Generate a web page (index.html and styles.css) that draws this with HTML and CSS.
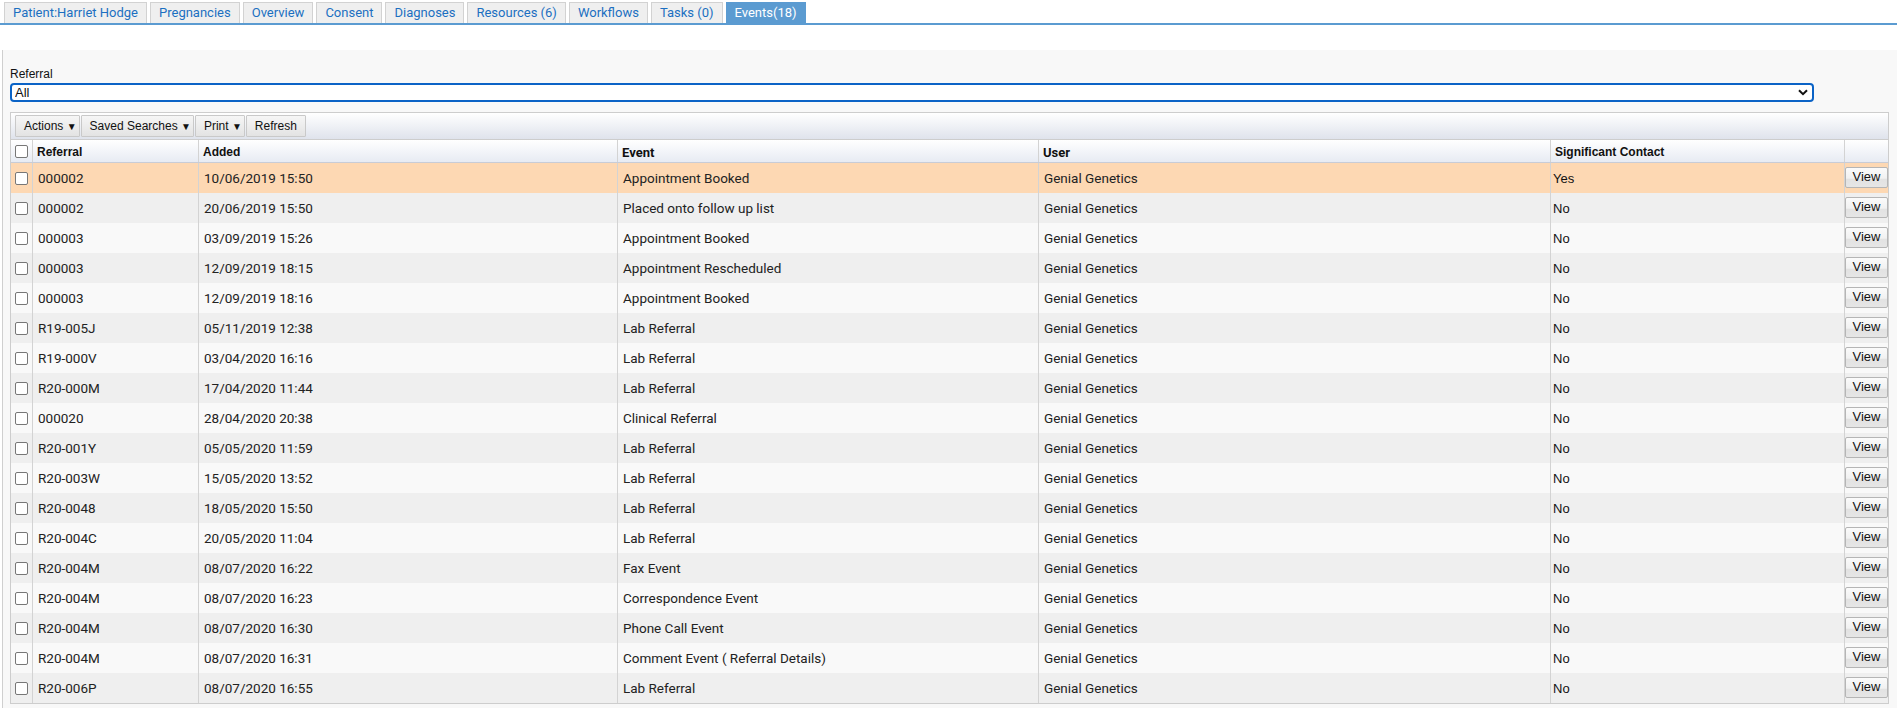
FILE: index.html
```html
<!DOCTYPE html>
<html lang="en">
<head>
<meta charset="utf-8">
<title>Events</title>
<link rel="stylesheet" href="styles.css">
</head>
<body>
<nav class="tabs">
  <a class="tab">Patient:Harriet Hodge</a>
  <a class="tab">Pregnancies</a>
  <a class="tab">Overview</a>
  <a class="tab">Consent</a>
  <a class="tab">Diagnoses</a>
  <a class="tab">Resources (6)</a>
  <a class="tab">Workflows</a>
  <a class="tab">Tasks (0)</a>
  <a class="tab active">Events(18)</a>
</nav>
<div class="gap"></div>
<section class="panel">
  <label class="field-label">Referral</label>
  <div class="select-wrap">
    <select class="select"><option>All</option></select>
    <svg class="chev" width="10" height="7" viewBox="0 0 10 7"><path d="M1 1.2 L5 5.2 L9 1.2" fill="none" stroke="#111" stroke-width="2"/></svg>
  </div>
  <div class="grid-box">
    <div class="toolbar">
      <button class="tbtn dd">Actions <span class="arr">▼</span></button>
      <button class="tbtn dd">Saved Searches <span class="arr">▼</span></button>
      <button class="tbtn dd">Print <span class="arr">▼</span></button>
      <button class="tbtn">Refresh</button>
    </div>
    <div class="row head">
      <div class="c cb"><span class="box"></span></div>
      <div class="c h1">Referral</div>
      <div class="c h1">Added</div>
      <div class="c h2">Event</div>
      <div class="c h2">User</div>
      <div class="c h1 sig">Significant Contact</div>
      <div class="c"></div>
    </div>
    <div id="rows"></div>
  </div>
</section>
<script src="app.js"></script>
</body>
</html>
```

FILE: app.js
```js
const data = [
  ["000002","10/06/2019 15:50","Appointment Booked","Yes"],
  ["000002","20/06/2019 15:50","Placed onto follow up list","No"],
  ["000003","03/09/2019 15:26","Appointment Booked","No"],
  ["000003","12/09/2019 18:15","Appointment Rescheduled","No"],
  ["000003","12/09/2019 18:16","Appointment Booked","No"],
  ["R19-005J","05/11/2019 12:38","Lab Referral","No"],
  ["R19-000V","03/04/2020 16:16","Lab Referral","No"],
  ["R20-000M","17/04/2020 11:44","Lab Referral","No"],
  ["000020","28/04/2020 20:38","Clinical Referral","No"],
  ["R20-001Y","05/05/2020 11:59","Lab Referral","No"],
  ["R20-003W","15/05/2020 13:52","Lab Referral","No"],
  ["R20-0048","18/05/2020 15:50","Lab Referral","No"],
  ["R20-004C","20/05/2020 11:04","Lab Referral","No"],
  ["R20-004M","08/07/2020 16:22","Fax Event","No"],
  ["R20-004M","08/07/2020 16:23","Correspondence Event","No"],
  ["R20-004M","08/07/2020 16:30","Phone Call Event","No"],
  ["R20-004M","08/07/2020 16:31","Comment Event ( Referral Details)","No"],
  ["R20-006P","08/07/2020 16:55","Lab Referral","No"]
];
const host = document.getElementById("rows");
data.forEach((d, i) => {
  const r = document.createElement("div");
  r.className = "row body " + (i === 0 ? "hl" : (i % 2 ? "dark" : "light"));
  r.innerHTML =
    '<div class="c cb"><span class="box"></span></div>' +
    '<div class="c t">' + d[0] + '</div>' +
    '<div class="c t">' + d[1] + '</div>' +
    '<div class="c t">' + d[2] + '</div>' +
    '<div class="c t">Genial Genetics</div>' +
    '<div class="c s">' + d[3] + '</div>' +
    '<div class="c v"><button class="view">View</button></div>';
  host.appendChild(r);
});
```

FILE: styles.css
```css
* { box-sizing: border-box; }
body {
  margin: 0;
  font-family: Roboto, "Liberation Sans", sans-serif;
  color: #222;
  background: #fff;
}
.tabs {
  display: flex;
  gap: 3px;
  padding: 2px 0 0 4px;
  border-bottom: 2px solid #5b9bd1;
}
.tab {
  height: 21px;
  line-height: 20px;
  padding: 0 8px;
  font-size: 13px;
  color: #1c6fc1;
  background: #efefef;
  border: 1px solid #d2d2d2;
  border-bottom: none;
}
.tab.active {
  background: #5b9bd1;
  border-color: #5b9bd1;
  color: #fff;
}
.gap { height: 25px; }
.panel {
  margin-left: 2px;
  border-left: 1px solid #cfcfcf;
  background: #f8f8f8;
  padding: 16px 8px 4px 7px;
}
.field-label {
  display: block;
  font: 12px/17px "Liberation Sans", Arial, sans-serif;
  color: #111;
}
.select-wrap {
  position: relative;
  width: 1804px;
  margin-bottom: 10px;
}
.select {
  display: block;
  width: 100%;
  height: 19px;
  appearance: none;
  -webkit-appearance: none;
  border: 2px solid #0b63c6;
  border-radius: 4px;
  background: #fff;
  font: 13px "Liberation Sans", Arial, sans-serif;
  padding: 0 0 0 3px;
  color: #111;
}
.chev {
  position: absolute;
  right: 6px;
  top: 6px;
}
.grid-box {
  border: 1px solid #cdcdcd;
  background: #fff;
}
.toolbar {
  display: flex;
  gap: 1px;
  height: 27px;
  padding: 2px 4px 0;
  background: linear-gradient(#ffffff, #dfe3ec);
  border-bottom: 1px solid #cdcdcd;
}
.tbtn {
  height: 22px;
  padding: 0 8px;
  font: 12px "Liberation Sans", Arial, sans-serif;
  color: #111;
  background: linear-gradient(#f6f6f6, #e3e3e3);
  border: 1px solid #c9c9c9;
  border-radius: 1px;
}
.tbtn.dd { padding-right: 2px; }
.arr { font-size: 10px; }
.row {
  display: grid;
  grid-template-columns: 21px 166px 419px 421px 512px 294px 44px;
}
.head {
  height: 23px;
  background: linear-gradient(#ffffff, #e7ebf3);
  border-bottom: 1px solid #c8ccd6;
}
.c {
  display: flex;
  align-items: center;
  border-left: 1px solid #d3d3d3;
  padding-left: 5px;
  font-size: 13.5px;
  white-space: nowrap;
  overflow: hidden;
}
.c.cb { border-left: none; padding-left: 4px; }
.head .c { padding-left: 4px; padding-top: 2px; }
.head .c.cb { padding-top: 0; }
.h1 { font: bold 12px "Liberation Sans", Arial, sans-serif; color: #111; }
.h2 { font: bold 13px Roboto, sans-serif; color: #111; }
.box {
  display: block;
  width: 13px;
  height: 13px;
  border: 1px solid #777;
  border-radius: 2px;
  background: #fff;
}
.body { height: 30px; }
.body.hl { background: #fdd8b3; }
.body.dark { background: #efefef; }
.body.light { background: #f9f9f9; }
.c.s {
  padding-left: 2px;
  font: 13px "Liberation Sans", Arial, sans-serif;
  color: #111;
}
.c.v { padding: 0; align-items: flex-start; }
.view {
  margin-top: 4px;
  width: 44px;
  height: 21px;
  padding: 0 0 2px;
  font: 13px "Liberation Sans", Arial, sans-serif;
  color: #111;
  background: linear-gradient(#fbfbfb 0%, #f1f1f1 55%, #e2e2e2 56%, #e6e6e6 100%);
  border: 1px solid #b5b5b5;
  border-radius: 2px;
}
```
